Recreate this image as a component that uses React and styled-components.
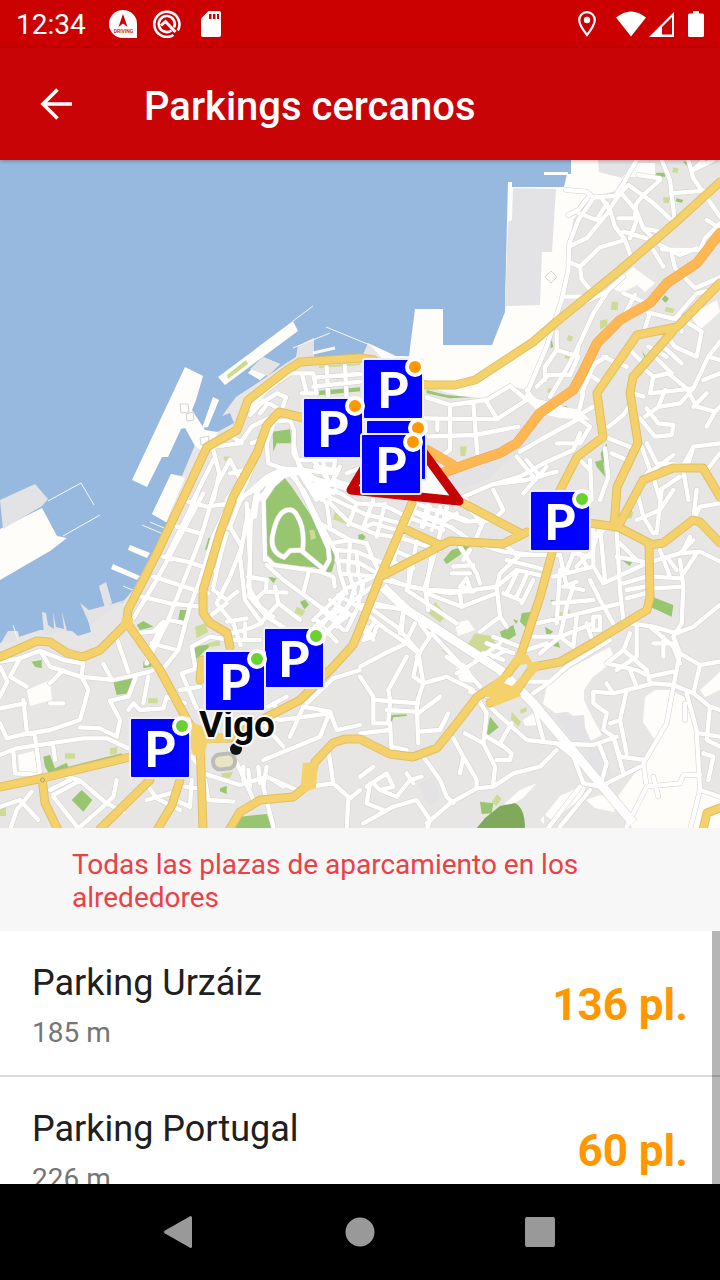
import React from 'react';
import styled, { createGlobalStyle } from 'styled-components';

const GlobalStyle = createGlobalStyle`
    * {
        box-sizing: border-box;
    }

    body {
        margin: 0;
        font-family: Roboto, sans-serif;
        background: #fff;
    }
`;

const Screen = styled.div`
    display: flex;
    flex-direction: column;
    height: 100vh;
    overflow: hidden;
`;

const StatusBar = styled.div`
    display: flex;
    align-items: center;
    justify-content: space-between;
    flex: none;
    height: 48px;
    padding: 0 16px;
    color: #fff;
    background: #cb0000;
`;

const StatusGroup = styled.div`
    display: flex;
    align-items: center;
    gap: ${({ gap }) => gap}px;
`;

const Clock = styled.time`
    padding-top: 2px;
    margin-right: 7px;
    font-size: 28px;
    line-height: 32px;
`;

const AppBar = styled.header`
    position: relative;
    z-index: 2;
    display: flex;
    align-items: center;
    flex: none;
    gap: 56px;
    height: 112px;
    padding: 0 24px;
    color: #fff;
    background: #c80406;
    box-shadow: 0 1px 4px rgba(0, 0, 0, .3);
`;

const IconButton = styled.button`
    display: flex;
    align-items: center;
    justify-content: center;
    width: 64px;
    height: 64px;
    padding: 0;
    border: 0;
    color: inherit;
    background: none;
    cursor: pointer;
`;

const Title = styled.h1`
    margin: 0;
    padding-top: 6px;
    font-size: 40px;
    font-weight: 500;
    line-height: 48px;
`;

const MapArea = styled.main`
    position: relative;
    flex: 1;
    min-height: 0;
    overflow: hidden;
    background: #e7e6e4;
`;

const MapDrawing = styled.svg`
    display: block;
    width: 100%;
    height: 100%;
`;

const Marker = styled.button`
    position: absolute;
    width: 62px;
    height: 62px;
    margin: -3px 0 0 -3px;
    padding: 0;
    border: 2px solid #ededff;
    border-radius: 3px;
    color: #fff;
    background: #0000fe;
    font-family: Lato, sans-serif;
    font-size: 50px;
    font-weight: 900;
    line-height: 56px;
    text-align: center;
    cursor: pointer;
`;

const Availability = styled.span`
    position: absolute;
    top: -3px;
    right: -3px;
    width: 20px;
    height: 20px;
    border: 4px solid #fff;
    border-radius: 50%;
    background: ${({ free }) => (free ? '#69d22f' : '#ff9800')};
`;

const Notice = styled.p`
    flex: none;
    margin: 0;
    padding: 20px 72px 17px;
    color: #ec4045;
    background: #f7f7f7;
    font-size: 28px;
    line-height: 33px;
`;

const ListArea = styled.section`
    position: relative;
    flex: none;
    height: 253px;
    overflow: hidden;
    background: #fff;
`;

const ParkingList = styled.ul`
    margin: 0;
    padding: 0;
    list-style: none;
`;

const ParkingRow = styled.li`
    display: flex;
    align-items: center;
    justify-content: space-between;
    height: 146px;
    padding: 4px 32px 0;
    border-bottom: 2px solid #dadada;
`;

const ParkingName = styled.h2`
    margin: 0;
    color: #202020;
    font-size: 36px;
    font-weight: 400;
    line-height: 44px;
`;

const Distance = styled.div`
    margin-top: 12px;
    color: #757575;
    font-size: 28px;
    line-height: 32px;
`;

const Places = styled.div`
    color: #ff9800;
    font-size: 44px;
    font-weight: 700;
    line-height: 52px;
`;

const ScrollThumb = styled.div`
    position: absolute;
    top: 0;
    right: 0;
    bottom: 0;
    width: 8px;
    background: rgba(0, 0, 0, .29);
`;

const NavBar = styled.nav`
    display: flex;
    align-items: center;
    justify-content: center;
    flex: none;
    gap: 116px;
    height: 96px;
    color: #999;
    background: #000;
`;

const markers = [
    { id: 'puerto', x: 365, y: 361 },
    { id: 'berbes', x: 305, y: 400 },
    { id: 'urzaiz', x: 368, y: 422 },
    { id: 'portugal', x: 363, y: 436 },
    { id: 'travesia', x: 532, y: 493, free: true },
    { id: 'castrelos', x: 266, y: 630, free: true },
    { id: 'hispanidad', x: 207, y: 653, free: true },
    { id: 'balaidos', x: 132, y: 720, free: true },
];

const parkings = [
    { name: 'Parking Urzáiz', distance: '185 m', places: '136 pl.' },
    { name: 'Parking Portugal', distance: '226 m', places: '60 pl.' },
];

const MAP_TOP = 160;
const MAP_WIDTH = 720;
const MAP_HEIGHT = 668;

// each sector keeps its own grid, three units to a map pixel
const sectors = [
    {
        id: 'nw',
        x: 0,
        y: 160,
        streets: `
            M750 745 L800 690 L870 640 L940 640 L950 700 L905 700 M905 640 L920 700
            M940 680 L1080 665 M980 622 L985 715 M1035 618 L1040 715 M950 652 L1080 642
            M760 745 L830 700 L858 712 L840 765 M750 765 L790 722 L830 742 M780 760 L800 735
            M640 860 L720 850 L755 800 L820 768 M690 825 L725 850
            M825 780 L800 850 L805 910 L860 930 M825 785 L870 780 L882 810 L880 880 L925 960 L965 1020
            M755 850 L790 835 M640 870 L658 940 L640 1020 M690 900 L655 965 M690 900 L722 960 L680 1020
            M720 1020 L800 950 L870 930 L960 960 L1080 990 M775 1020 L830 955
            M880 850 L900 930 L1000 1000 M898 900 L1005 900 L1000 940 L910 930
            M940 900 L985 960 L970 1020 M1040 940 L1080 925 M640 900 L580 1020 M765 900 L742 960 L715 1020
            M860 940 L820 975 L790 1020 M900 940 L950 1020 M925 970 L1020 1000 M735 930 L690 940`,
        parks: `M818 815 L870 808 L875 850 L830 850 L820 875Z M957 692 L1080 682 V694 L957 706Z`,
        lawns: `M670 890 l20 0 l-15 15Z M948 950 l18 0 l-2 28 l-15 -5Z M957 617 L1080 609 V615 L957 624Z`,
    },
    {
        id: 'ne',
        x: 360,
        y: 160,
        streets: `
            M618 90 L680 95 L700 112 L765 108 L790 70 L830 0 M690 105 L655 150 L625 165 M700 115 L655 180 L628 250 L625 330 L605 420 L585 480 L560 560 L505 690
            M725 115 L750 150 L680 235 L630 258 M750 150 L765 200 L795 240 L720 262 L660 320 L665 358 L695 395 L670 410 L612 410 M625 305 L660 320
            M750 145 L785 95 L805 75 L875 125 L945 190 M780 95 L830 155 L850 205 L885 240 M850 105 L828 132 L825 175 L775 175 M900 60 L850 105
            M655 160 L710 180 L740 130 M835 45 L900 55 M795 240 L815 295 M790 215 L860 235 M830 180 L810 235 M850 205 L900 215
            M905 0 L930 60 L945 190 M985 0 L1000 55 L1080 170 M932 100 L1035 92 M1030 0 L1000 30 L1060 0 M1040 180 L1080 205
            M1080 190 L1035 235 L1020 270 L905 268 M900 255 L960 285 L1010 265 M880 270 L910 320 M935 280 L945 325 L1005 385 L1080 352
            M745 390 L700 460 L645 580 L620 625 L570 710 M640 445 L740 395 L790 350 M790 400 L860 430 M825 405 L790 470 L735 520
            M865 458 L950 478 L965 515 M870 458 L855 505 M955 470 L1025 515 L1010 590 L945 560 L930 540 M1080 385 L1010 400 L950 470
            M910 560 L965 610 M885 590 L935 640 M865 560 L920 590 M850 625 L880 650 L870 700 L1000 685 L1045 590 L1080 545
            M880 650 L925 640 L980 685 L1010 740 L1065 755 L1080 740 M840 775 L885 830 L935 825 L940 795 L895 790 L860 745 M820 700 L850 710 M855 770 L895 740 L915 690 M900 740 L960 730 L1000 685
            M1065 755 L1040 800 M1045 590 L1080 600 M1030 660 L1080 640 M1000 740 L1040 700
            M590 515 L590 570 L655 590 L630 645 L565 645 L530 680 M590 570 L555 620 L555 660 M655 560 L650 590
            M200 712 L270 735 L380 720 L450 678 L500 720 L410 778 L190 775 M190 830 L345 825 L475 800 M270 735 L270 870 L255 880 M340 730 L352 880 M380 725 L412 778 M232 780 L232 810
            M500 690 L520 720 L600 740 M530 760 L640 760 M480 875 L540 840 L650 780 M410 970 L480 950 L560 905 L640 870 L660 820 M470 890 L520 950 M500 900 L540 950 M490 1000 L560 920
            M300 1015 L400 972 L500 960 L590 935 M665 700 L690 640 L705 610 M680 640 L730 670 M670 700 L655 760 M700 740 L650 770 L690 800 L660 850 L590 850 M690 620 L740 590 M730 590 L800 620 M780 600 L810 570 L850 610
            M745 800 L790 765 L820 720 M745 835 L820 865 M690 900 L695 1020 M735 865 L745 950 L720 1020 M755 880 L800 900 M660 900 L690 930
            M845 860 L870 930 L830 980 M860 850 L890 910 L970 915 L1000 860 L1080 850 M1045 925 L1080 880 M875 935 L900 1020 M880 930 L940 885 M1000 860 L985 910 M970 930 L985 1020 M900 990 L960 950`,
        parks: `M890 38 l25 0 l0 12 l-32 0Z M970 5 l20 0 l5 30Z M905 418 l10 -12 l12 10 l-10 12Z M572 530 l8 30 l-8 5Z M740 850 L745 895 L730 910 L735 950 L710 920 L705 905 L725 900 L722 880Z M950 115 l20 5 l-5 8 l-18 -4Z M845 570 l18 30 l-10 -8Z M200 690 L260 705 L335 712 L270 715 L200 700Z M590 742 l30 -4 l5 6 l-30 6Z`,
        lawns: `M755 425 l20 0 l-2 25 l-20 0Z M720 482 l22 -4 l0 18 l-22 14Z M625 525 l14 5 l-6 16 l-12 -6Z M617 582 l14 5 l-6 10 l-12 -4Z M918 440 l26 6 l-6 14 l-24 -6Z M565 685 l16 0 l-6 18 l-14 -6Z M300 860 l20 -2 l-4 30 l-14 0Z M910 112 l20 0 l-4 18 l-16 -2Z M940 22 l16 4 l-4 14 l-16 -4Z`,
    },
    {
        id: 'sw',
        x: 0,
        y: 490,
        streets: `
            M725 20 L690 110 L725 170 L690 260 L650 340 L700 400 L722 465 M770 0 L752 100 L748 320 L800 380 L870 425
            M745 60 L720 200 L735 330 L785 400 M645 0 L600 150 L560 250 L500 400 L440 520 M695 20 L640 140 L600 270 L570 350 L535 480 L490 535
            M590 15 L555 90 L500 200 M610 10 L545 130 L470 270 L400 385 M565 35 L620 50 L690 40 M530 110 L600 130 M490 200 L560 215 L640 240 M460 260 L590 302 L625 310 M425 320 L510 340 L600 350
            M400 430 L460 425 L490 395 L440 500 M455 460 L530 480 M505 390 L555 400 M640 300 L680 330 L712 305 M635 375 L680 340 M680 395 L740 385 M690 430 L735 420 L785 400
            M680 130 L660 200 L640 290 M690 110 L660 120
            M0 515 L60 505 L120 482 L150 530 L240 560 L340 570 L450 545 L480 530 M60 505 L30 560 L80 590 M0 530 L22 575 L0 620 M120 482 L190 510 L250 520 M250 510 L245 560
            M190 540 L150 580 M245 560 L265 600 L240 690 L150 720 L60 735 L20 745 L0 700 M70 630 L80 720 M0 655 L75 640 M150 640 L190 640 M350 445 L385 545 M310 522 L335 568
            M240 712 L300 715 L350 740 L360 690 L330 632 L385 620 L410 555 M0 795 L50 775 L250 745 L320 745 L385 775 M105 740 L120 850 M40 785 L45 850 L120 855 M160 770 L165 810
            M385 660 L400 640 L420 660 L490 655 L500 620 L555 640 M445 560 L430 640 M545 550 L590 535 M545 550 L590 655 M540 600 L600 590 M575 470 L630 440 L690 450 L780 450 M575 470 L585 530 M735 450 L735 400
            M160 915 L240 872 L320 940 L235 1015 L160 920 M240 872 L200 860 M350 870 L340 920 L320 940 L370 965 M150 900 L210 870 M0 950 L60 930 L115 990 M30 1020 L50 960 L95 905
            M610 850 L720 885 L800 860 L890 900 M690 780 L725 850 L765 940 M800 830 L790 890 L820 1010 M615 870 L625 930 L700 935 M435 875 L470 925 L540 960 M440 930 L510 910 M525 930 L570 950 L575 870 M555 890 L600 895 M575 800 L600 830
            M805 650 L860 620 M820 640 L840 670 M690 745 L720 710 L780 695 M780 690 L850 770 M870 740 L910 650 L990 665 L1010 720 L1080 705 M920 640 L1000 565 L1080 540 M990 665 L960 740 L790 810 M780 710 L800 680 L840 690 L990 670
            M730 870 L730 830 M750 890 L745 840 M780 880 L775 830 M930 890 L1000 880 L1050 925 L1080 900 M985 780 L1000 880 M1045 925 L1040 1020 M820 870 L850 890`,
        parks: `M625 145 L648 138 L640 175 L615 180Z M410 405 L430 393 L460 410 L420 420Z M540 360 l25 0 l-15 48 l-18 -5Z M585 470 L640 460 L580 515Z M340 575 L397 565 L385 610 L350 615Z M430 515 l20 -5 l5 20 l-25 5Z M215 930 L245 900 L277 930 L250 965Z M130 800 L150 795 L165 835 L200 818 L205 830 L365 790 L370 800 L150 855 L135 830Z M0 878 L110 862 V872 L0 886Z M705 1020 L720 980 L800 972 L820 1020Z M660 895 l20 -8 l0 25 l-20 -8Z M95 515 l30 -5 l0 25 l-20 -5Z`,
        lawns: `M585 410 L615 400 L625 425 L590 445Z M445 625 l28 0 l0 15 l-28 0Z M195 790 l30 0 l0 16 l-30 0Z M330 775 l22 -4 l-2 20 l-20 3Z M0 942 l18 0 l0 36 l-18 0Z M665 850 l35 -5 l-10 18 l-25 4Z M625 460 l35 -10 l0 18 l-35 2Z`,
    },
    {
        id: 'se',
        x: 360,
        y: 490,
        streets: `
            M165 70 L270 110 L330 150 M180 45 L320 95 L400 90 L430 60 L400 0 M210 50 L190 110 M260 55 L240 130 M330 60 L370 95 L350 140
            M430 160 L470 195 L600 195 M350 160 L430 185 L520 195 M480 195 L420 250 L410 290 M215 195 L200 290 M150 215 L145 290 M95 270 L145 290 L270 310 L410 290 L470 240 L560 260 M300 170 L350 250 L360 280 M280 230 L340 225 M275 250 L330 250 M300 310 L305 350 L200 310 M305 350 L410 310 M330 180 L310 210
            M410 290 L420 380 L440 410 M470 250 L440 310 M500 255 L470 320 M520 270 L485 340 M430 310 L480 330 M440 210 L560 240 M420 380 L360 425 M140 300 L290 400 M300 290 l20 -25 l10 30Z
            M600 195 L620 290 L670 300 M640 190 L620 240 M690 190 L650 230 M580 260 L700 230 L730 280 L860 220 M600 240 L590 400 M580 340 L700 330 M690 270 L720 330 L760 400 M640 290 L620 350 L600 440 M530 400 L620 380 L780 340 M520 440 L600 440 L700 400 M500 480 L560 460 M540 490 L600 440 L640 470 M650 380 L640 470 M700 380 l20 0 l0 40 l-20 0Z M680 400 L700 460 M610 290 l40 -15
            M720 110 L735 270 M740 110 L700 150 M770 120 L780 300 L790 390 M770 200 L850 215 M780 160 L830 210 M700 110 L700 230 M640 190 L690 200 L720 110 M660 190 L680 230 M790 280 L860 260 M800 300 L855 290 M800 325 L855 310
            M830 0 L850 80 L880 130 M905 0 L890 130 M830 90 L900 60 L940 0 M1000 90 L1010 0 M1080 40 L1020 50 L1000 90
            M875 215 L960 190 L1020 185 L1080 215 M880 260 L960 265 M880 295 L970 290 L960 210 M970 290 L965 400 L940 440 M920 200 L950 240 M960 190 L1000 150 M970 180 L990 140 M1010 190 L970 250 M900 180 L930 260
            M810 400 L880 410 L950 430 L1000 410 L1080 345 M830 410 L830 500 L770 540 M870 410 L940 470 L960 520 M880 460 L950 460 M910 440 L910 500 M810 430 L790 480 L860 540 M940 440 L960 490 L1020 525 L1080 515 M960 490 L940 590 M1020 525 L1000 610 M790 480 L740 520 L830 540 L870 560 L940 545 M860 540 L870 580 M810 540 L830 590
            M500 575 L570 575 L620 530 L750 450 M520 610 L570 575 M700 605 L760 610 L880 580 L940 585 L1000 610 L1050 650 L1080 660 M700 605 L700 640 L740 670 L730 720 L760 740 L780 800 L855 810 M740 580 L760 610 M800 600 L780 690 L750 700 M780 690 L800 790
            M940 590 L920 700 L850 820 L860 890 L800 1010 M980 610 L1010 720 L1020 900 L990 1020 M975 690 L975 640 M1050 650 L1040 750 L1080 770 M1020 730 L1080 740 M1030 790 L1060 800 L1045 870 M860 890 L960 880 L970 855 L1020 855 M880 860 L895 920 M1020 900 L1080 920
            M0 345 L130 355 M30 380 L80 420 L140 460 L175 490 L160 560 L190 580 M20 410 L40 450 L10 420 M130 370 L125 420 M165 400 L145 440 M180 400 L210 440 L170 500 M215 430 L280 500 L360 590 M140 460 L75 490 L0 530 M140 500 L85 600 L90 630 M175 490 L190 580 L170 640 L175 760 M190 580 L260 560 L340 600
            M0 560 L40 620 L40 700 L90 700 M50 630 L175 640 M80 660 L165 665 M90 640 L85 690 M240 620 L175 670 M265 670 L240 720 L175 725 M0 730 L90 720 M90 700 L95 780 M95 770 L140 780 M260 500 L300 530 M290 550 L340 520 L420 460
            M400 440 L480 470 M380 460 L460 490 M380 490 L430 510 M400 500 L440 480 M340 520 L370 490 M330 605 L390 620 M350 620 L380 670 L370 760 L405 830 L400 880 M380 640 L410 670 L500 750 L590 760 L700 765 L770 740 M520 640 L550 750 M590 760 L640 800 L670 880 L720 890 M590 780 L540 830 L460 850 L400 890 L350 895 L270 940 L200 1000
            M315 730 L370 760 M455 700 L420 760 L455 790 L450 810 L410 810 M380 740 L430 770 M190 800 L240 870 L260 920 L280 940 M280 745 L310 800 L350 870 L350 895 M300 850 L310 800 M200 1020 L210 990 L170 930 L100 950 L10 1000 M0 860 L40 830 M30 880 L20 940 L70 960 M20 890 L80 850 L100 890 L60 900 L40 880 M60 900 L110 920 L150 870 L185 860 M140 850 L160 880
            M720 890 L800 850 L840 830 M720 890 L740 820 L720 770 M660 890 L560 1020 M690 900 L600 1010 M760 740 L790 850`,
        parks: `M250 210 L275 180 L340 160 L300 195 L260 222Z M420 425 L460 405 L468 435 L430 460Z M485 370 L515 365 L500 415 L480 395Z M876 320 L940 345 L935 380 L870 350Z M390 680 L416 712 L378 742Z M360 935 L400 940 L395 970 L365 972Z M555 410 L580 425 L560 440Z M580 460 l15 -5 l5 18 l-20 -5Z M785 210 l35 -2 l-10 20Z M570 330 l20 2 l-8 12Z M978 412 l25 0 l0 6 l-25 0Z M800 50 l15 -10 l0 30Z M90 675 l50 -2 l0 5 l-40 4 l-5 16Z M460 388 l14 4 l-6 10Z`,
        lawns: `M318 470 L345 430 L404 440 L404 480 L385 497Z M205 370 L225 335 L260 375 L240 398Z M245 480 l15 -5 l25 30 l-15 -5Z M590 370 l40 -10 l0 15 l-35 10Z M455 665 l28 30 l-8 15 l-22 -22Z M480 660 l20 -8 l0 12 l-18 8Z M395 935 l16 -22 l14 14 l-16 22Z M795 65 l25 0 l-5 20 l-20 0Z`,
    },
    {
        id: 'centro',
        x: 240,
        y: 460,
        streets: `
            M142 150 Q160 145 172 168 Q195 205 188 270 L150 272 L132 292 Q88 275 98 225 Q112 155 142 150Z M182 270 L252 328
            M75 300 L70 110 L95 55 L130 35 L165 50 L205 130 L265 265 L268 300 L252 328 M75 290 L100 315 L240 335 L280 350 L284 380
            M30 100 L80 50 L130 25 L190 30 L230 60 L330 90 M45 170 L55 90 L95 50 M20 130 L30 300 L25 380 L60 440 L100 470
            M150 40 L190 90 L240 190 L330 240 L380 250 M180 30 L260 130 L270 200 M200 60 L265 110 L370 160 L480 190 M250 10 L262 60 L270 130 M225 20 L290 30 L280 60
            M270 130 L330 190 L400 220 L485 235 M285 90 L350 130 L430 135 L500 170 M300 20 L280 60 L330 75 M350 130 L325 195 M400 120 L370 200 M435 130 L410 230 M375 200 L400 190 L470 210
            M240 190 L290 280 L300 340 L320 400 M330 240 L325 330 L345 400 M380 250 L400 300 L420 340 M285 270 L350 275 L430 310 M290 300 L360 310 L420 345 M300 340 L410 350 M350 280 L355 340 L370 390 M270 250 L330 240
            M80 315 L130 360 L240 440 L300 480 M205 340 L190 400 M25 350 L80 360 L78 390 L50 415 M80 395 L140 398 M105 380 L115 430 L70 480 M115 430 L180 480
            M400 350 L320 385 L220 480 M410 370 L330 430 L260 520 M320 385 L290 440 L250 490 M270 420 L340 470 M245 450 L310 510 M295 405 L370 450 M230 480 L290 545 M345 380 L330 430 L290 500 M370 370 L350 450 L320 510 M225 500 L300 450 M250 520 L320 470
            M500 170 L610 210 M485 235 L600 270 M530 130 L490 225 M565 130 L545 200 M600 140 L575 210 M515 150 L610 185 L650 160 M620 140 L590 260 L555 380 M460 270 L530 300 M450 305 L520 325 M530 245 L505 380 M475 250 L450 340
            M430 360 L560 390 L700 395 M555 385 L565 450 M405 430 L490 450 M385 440 L470 500 L540 580 M400 490 L370 540 L400 530 L410 500 M490 450 L480 520 M680 120 L720 190 M600 150 L680 180`,
        parks: `M75 110 L110 60 L135 55 L155 80 L275 260 L286 300 L275 335 L250 338 L225 322 L110 312 L78 280Z M35 80 L80 55 L55 110 L65 70Z M355 225 l12 -4 l10 10 l-8 10 l-14 -4Z M85 350 l25 5 l-10 15Z M180 425 l15 -6 l12 15 l-14 14Z`,
        lawns: `M285 155 L325 170 L318 192 L278 178Z M170 440 l26 12 l-10 16 l-22 -10Z M208 210 l15 0 l5 25 l-15 5Z M225 50 l16 0 l-2 24 l-12 -6Z`,
    },
];

const mainRoads = `
    M0 657 L37 641 L50 642 L67 653 L83 657 L100 650 L113 637 L127 623 L128 610 L157 553 L187 490 L207 447 L237 430 L248 400 L287 370 L300 362 L360 358 L374 360 L400 380 L427 385 L455 385 L475 380 L533 342 L555 323 L620 270 L675 223 L720 182
    M310 419 L300 417 L279 412 L267 425 L257 453 L233 497 L220 533 L203 590 L203 613 L210 623 L227 633 L230 647 M202 660 L200 680
    M127 623 L137 637 L160 670 L187 720 L200 740 L203 830
    M0 787 L43 778 L130 757 L200 739 L230 738 L267 717 L300 700 L333 667 L353 645 L360 628 L380 577 L412 503
    M42 778 L45 803 L58 830 M150 780 L100 829 M180 780 L172 805 L157 830
    M229 830 L240 812 L260 800 L293 797 L308 785 L315 762 L333 743 L345 739 L360 739 L390 754 L413 757 L437 748 L457 723 L477 697 L503 680 L520 657 L540 597 L552 553
    M490 703 L515 693 L533 667 L560 662 L593 643 L647 610 L650 597 L649 543 L618 527 L588 523
    M649 545 L663 543 L693 520 L700 522 L720 543 M380 577 L413 560 L450 541 L503 544 L527 532 M463 503 L520 533 M407 530 L440 545
    M558 494 L577 457 L603 437 L597 393 L637 335 L677 327 L720 283 M673 331 L633 377 L630 393 L638 443 L617 487 L614 527
    M619 525 L643 480 L673 468 L703 468 L720 497 M703 830 L707 813 L720 808`;

const motorway = 'M427 450 L453 465 M440 474 L473 462 L500 453 L517 443 L540 413 L573 390 L583 372 L597 343 L620 320 L650 303 L667 283 L697 263 L720 233';

const railway = 'M383 587 L407 610 L500 670 L533 703 L633 823';

const toSector = ({ x, y }) => `translate(${x} ${y}) scale(${1 / 3})`;

const CityMap = () => (
    <MapDrawing
        viewBox={`0 ${MAP_TOP} ${MAP_WIDTH} ${MAP_HEIGHT}`}
        preserveAspectRatio="none"
        strokeLinejoin="round"
        role="img"
        aria-label="Mapa de Vigo"
    >
        <rect x="0" y="160" width="720" height="668" fill="#e7e6e4" />

        {/* port and industrial ground */}
        <g fill="#fffdfa">
            <path d="M409 357 L396 355 L368 343 L395 372 L423 386 L460 396 L485 398 L508 385 L527 390 L547 347 L568 267 L573 220 L590 197 L620 190 L637 160 L560 160 L500 220 L480 300 L410 300Z" />
            <path d="M610 647 L615 660 L593 677 L584 690 L584 700 L592 717 L602 735 L590 741 L583 724 L568 712 L555 713 L543 704 L547 685 L572 667Z M523 720 L535 712 L540 725 L525 726Z" />
            <path d="M645 697 L655 690 L670 690 L684 697 L697 730 L700 790 L720 798 L720 828 L632 828 L618 796 L640 766 L655 740 L643 722Z" />
            <path d="M545 815 L560 796 L588 783 L580 800 L552 820Z M586 800 L600 795 L616 800 L614 812 L595 808Z M700 690 L720 672 V690 L705 697Z M690 315 L717 300 L720 312 L700 330Z" />
            <path d="M610 287 L633 267 L655 283 L645 292 L637 285 L622 293Z M27 690 L50 680 L52 700 L30 706Z M18 755 L38 750 L38 772 L20 775Z M455 623 L468 620 L475 630 L458 636Z M455 663 L468 680 L460 684Z" />
            <path d="M505 803 L520 790 L537 783 L523 798 L508 807Z M540 820 l4 -4 v8Z M630 163 h25 v14 h-25Z" />
        </g>
        <g fill="#e3e2e4">
            <path d="M598 160 H637 L622 178 L599 172Z" />
            <path d="M432 487 L460 470 L517 443 L545 430 L510 458 L490 478 L465 488Z M556 718 L563 712 L570 716 L584 715 L585 728 L591 741 L575 742Z M590 748 L602 748 L614 780 L608 785 L588 762Z M418 785 L435 775 L440 800 L428 805Z" />
        </g>

        {/* ria */}
        <path
            fill="#98b9df"
            d="M0 160 H571 V174 H567 L564 187 H509 L505 312 L492 345 H443 V309 H415 L409 356 H396 L368 343 L362 357 L313 357 L314 338 L298 346 L296 357 L285 364 L262 380 L236 397 L222 416 L230 413 L234 423 L206 438 L195 445 L182 476 L171 474 L152 514 L168 523 L133 590 L122 603 L108 605 L86 611 L91 632 L78 636 L72 631 L40 630 L0 643Z"
        />
        <g fill="#fffdfa">
            <path d="M132 480 L185 367 L203 376 L196 400 L192 410 L205 430 L218 432 L215 440 L204 452 L195 446 L185 428 L181 429 L168 457 L162 457 L147 487Z" />
            <path d="M202 428 L213 397 L219 400 L208 427Z M0 529 L42 508 L57 536 L67 538 L50 551 L0 580Z" />
            <path d="M218 377 L293 321 L298 331 L225 385Z M128 550 L130 545 L150 553 L147 558Z M111 569 L113 564 L140 576 L137 580Z" />
            <path d="M508 182 H512 V187 H556 L552 253 L543 254 L540 306 L505 306 L507 222Z M544 172 H568 V175 H544Z" />
            <path d="M263 357 L280 364 L260 380 L248 373Z M152 514 L171 474 L185 478 L166 522Z" />
        </g>
        <g fill="#e3e2e4">
            <path d="M0 500 L35 484 L48 499 L42 506 L3 529Z M513 188 L556 189 L552 252 L542 252 L540 305 L505 306 L508 222 L512 220Z" />
            <path d="M263 357 L280 364 L268 376 L250 369Z M298 346 L314 338 V357 H297Z M99 586 L106 582 L112 603 L105 608Z" />
            <path d="M42 612 L46 613 L48 625 L54 629 L53 612 L56 627 L64 629 L62 612 L67 631 L44 635Z M5 636 L8 631 L18 631 L20 640 L0 645Z M80 603 L90 611 L125 600 L90 625Z" />
        </g>
        <g fill="none" stroke="#f6f7f8" strokeWidth="1">
            <path d="M293 321 L313 306 M326 327 L370 345 M293 348 L330 333 M48 501 L81 483 L94 505 M63 536 L100 515 M150 522 L164 528 M142 525 L163 534 M123 586 L135 591 M13 625 L18 640" />
            <path strokeWidth="3" d="M313 353 L335 348" />
        </g>
        <path fill="#cadb8b" d="M227 375 L246 360 L248 364 L228 379Z" />
        <g fill="#fffdfa" stroke="#d6d4d2">
            <path d="M180 404 l8 0 l1 8 l-8 1Z M186 414 l7 -2 l1 8 l-7 1Z M200 438 l9 -2 l-1 8 l-7 1Z M545 277 l6 -6 l6 6 l-6 6Z" />
        </g>

        {sectors.map((sector) => (
            <g key={sector.id} transform={toSector(sector)}>
                <path fill="#98c56f" d={sector.parks} />
                <path fill="#cddb94" d={sector.lawns} />
            </g>
        ))}
        <path fill="#80a95b" d="M476 829 L485 818 L500 806 L515 803 Q525 808 525 829Z" />

        {/* casing first, so that crossings stay open */}
        {sectors.map((sector) => (
            <path
                key={sector.id}
                transform={toSector(sector)}
                d={sector.streets}
                fill="none"
                stroke="#d3d1ce"
                strokeWidth="16"
                strokeLinecap="round"
            />
        ))}
        <path fill="none" stroke="#cfcdca" strokeWidth="10" d={railway} />
        {sectors.map((sector) => (
            <path
                key={sector.id}
                transform={toSector(sector)}
                d={sector.streets}
                fill="none"
                stroke="#fff"
                strokeWidth="13"
                strokeLinecap="round"
            />
        ))}
        <path fill="none" stroke="#fff" strokeWidth="9" d={railway} />
        <path fill="#fff" d="M527 390 L540 402 L580 410 L590 420 L560 418 L540 413 L524 398Z M455 660 L465 664 L478 683 L465 682Z M268 478 L280 468 L300 468 L302 474 L285 478Z" />

        <g fill="none" strokeLinecap="round">
            <path stroke="#dfbf66" strokeWidth="9" d={mainRoads} />
            <path stroke="#f4d16b" strokeWidth="7" d={mainRoads} />
            <path stroke="#e5a34f" strokeWidth="10" d={motorway} />
            <path stroke="#ffb754" strokeWidth="9" d={motorway} />
        </g>
        <path
            fill="#f4d16b"
            fillRule="evenodd"
            d="M478 694 L505 672 L518 652 L528 655 L532 662 L545 662 L533 676 L518 690 L521 696 L492 707 L490 698Z M505 680 L518 665 L527 664 L528 670 L512 685Z"
        />
        <path fill="#fff" d="M504 683 L509 677 L516 682 L512 686Z" />
        <path fill="#f4d16b" d="M188 720 L212 731 L228 735 L228 742 L207 743 L205 755 L193 755 L190 745 L180 744Z M122 617 L133 618 L132 628 L120 630Z M303 763 L318 762 L316 788 L300 794Z" />
        <circle cx="42.500" cy="780" r="2" fill="#cddb94" stroke="#bda24c" />

        {/* stadium */}
        <rect x="213" y="754" width="22" height="15" rx="7" fill="#e9e4c3" stroke="#bdbbb8" strokeWidth="4" transform="rotate(-6 224 761)" />

        <path d="M351 490 L396 415 L459 501Z" fill="#fdfdfd" stroke="#c50204" strokeWidth="9" />

        <circle cx="236" cy="749" r="6" fill="#111" />
        <text
            x="237"
            y="737"
            textAnchor="middle"
            fontFamily="Roboto, sans-serif"
            fontSize="37"
            fontWeight="700"
            fill="#080808"
            stroke="#fff"
            strokeWidth="4"
            paintOrder="stroke"
        >
            Vigo
        </text>
    </MapDrawing>
);

const DrivingIcon = () => (
    <svg width="28" height="28" viewBox="0 0 28 28" aria-hidden="true">
        <path d="M14 0 A14 14 0 0 0 14 28 H28 V14 A14 14 0 0 0 14 0Z" fill="#fff" />
        <path d="M14 4 L18.500 17 L14 13.500 L9.500 17Z" fill="#cb0000" />
        <text x="14.500" y="23" textAnchor="middle" fontFamily="Roboto, sans-serif" fontSize="5" fontWeight="500" fill="#cb0000">DRIVING</text>
    </svg>
);

const SyncOffIcon = () => (
    <svg width="28" height="28" viewBox="0 0 28 28" fill="none" stroke="#fff" aria-hidden="true">
        <path d="M20.500 25 A12.600 12.600 0 1 1 24.800 20.500" strokeWidth="2.600" />
        <path d="M18.500 20.500 A8 8 0 1 1 21 17.500" strokeWidth="2.600" />
        <path d="M8 15.500 L12.500 11.500 L22.500 22" strokeWidth="3" />
    </svg>
);

const SdCardIcon = () => (
    <svg width="28" height="26" viewBox="0 0 28 26" aria-hidden="true">
        <path d="M11.500 0 H22 Q24 0 24 2 V24 Q24 26 22 26 H6 Q4 26 4 24 V7.500Z" fill="#fff" />
        <path d="M12 3 H14.500 V8 H12Z M16 3 H18.500 V8 H16Z M20 3 H22 V8 H20Z" fill="#cb0000" />
    </svg>
);

const PlaceIcon = () => (
    <svg width="18" height="26" viewBox="0 0 18 26" aria-hidden="true">
        <path d="M9 1.200 A7.700 7.700 0 0 0 1.200 9 C1.200 14 9 24 9 24 C9 24 16.800 14 16.800 9 A7.700 7.700 0 0 0 9 1.200Z" fill="none" stroke="#fff" strokeWidth="2.200" />
        <circle cx="9" cy="9" r="3.200" fill="#fff" />
    </svg>
);

const WifiIcon = () => (
    <svg width="30" height="26" viewBox="0 0 30 26" aria-hidden="true">
        <path d="M0 6.500 Q15 -5.500 30 6.500 L15 25.500Z" fill="#fff" />
    </svg>
);

const SignalIcon = () => (
    <svg width="25" height="26" viewBox="0 0 25 26" aria-hidden="true">
        <path fillRule="evenodd" d="M25 1 V26 H0Z M23 6 L13 16 V23.500 H23Z" fill="#fff" />
    </svg>
);

const BatteryIcon = () => (
    <svg width="16" height="26" viewBox="0 0 16 26" aria-hidden="true">
        <path d="M5 0 H11 V2.500 H14.500 Q16 2.500 16 4 V24.500 Q16 26 14.500 26 H1.500 Q0 26 0 24.500 V4 Q0 2.500 1.500 2.500 H5Z" fill="#fff" />
    </svg>
);

const App = () => (
    <Screen>
        <GlobalStyle />
        <StatusBar>
            <StatusGroup gap={16}>
                <Clock>12:34</Clock>
                <DrivingIcon />
                <SyncOffIcon />
                <SdCardIcon />
            </StatusGroup>
            <StatusGroup gap={14}>
                <StatusGroup gap={20}>
                    <PlaceIcon />
                    <StatusGroup gap={3}>
                        <WifiIcon />
                        <SignalIcon />
                    </StatusGroup>
                </StatusGroup>
                <BatteryIcon />
            </StatusGroup>
        </StatusBar>
        <AppBar>
            <IconButton aria-label="Volver">
                <svg width="32" height="32" viewBox="0 0 32 32" fill="none" stroke="currentColor" strokeWidth="3.600">
                    <path d="M32 16 H3 M17.500 1.500 L3 16 L17.500 30.500" />
                </svg>
            </IconButton>
            <Title>Parkings cercanos</Title>
        </AppBar>
        <MapArea>
            <CityMap />
            {markers.map(({ id, x, y, free }) => (
                <Marker
                    key={id}
                    style={{
                        left: `${(x / MAP_WIDTH) * 100}%`,
                        top: `${((y - MAP_TOP) / MAP_HEIGHT) * 100}%`,
                    }}
                >
                    P
                    <Availability free={free} />
                </Marker>
            ))}
        </MapArea>
        <Notice>Todas las plazas de aparcamiento en los alrededores</Notice>
        <ListArea>
            <ParkingList>
                {parkings.map(({ name, distance, places }) => (
                    <ParkingRow key={name}>
                        <div>
                            <ParkingName>{name}</ParkingName>
                            <Distance>{distance}</Distance>
                        </div>
                        <Places>{places}</Places>
                    </ParkingRow>
                ))}
            </ParkingList>
            <ScrollThumb />
        </ListArea>
        <NavBar>
            <IconButton aria-label="Atrás">
                <svg width="32" height="32" viewBox="0 0 32 32" fill="currentColor">
                    <path d="M26.500 0 Q28 0 28 1.500 V30.500 Q28 32 26.500 32 L1 17.500 Q-1 16 1 14.500Z" />
                </svg>
            </IconButton>
            <IconButton aria-label="Inicio">
                <svg width="30" height="30" viewBox="0 0 30 30" fill="currentColor">
                    <circle cx="15" cy="15" r="14.500" />
                </svg>
            </IconButton>
            <IconButton aria-label="Recientes">
                <svg width="30" height="30" viewBox="0 0 30 30" fill="currentColor">
                    <rect width="30" height="30" rx="2" />
                </svg>
            </IconButton>
        </NavBar>
    </Screen>
);

export default App;
